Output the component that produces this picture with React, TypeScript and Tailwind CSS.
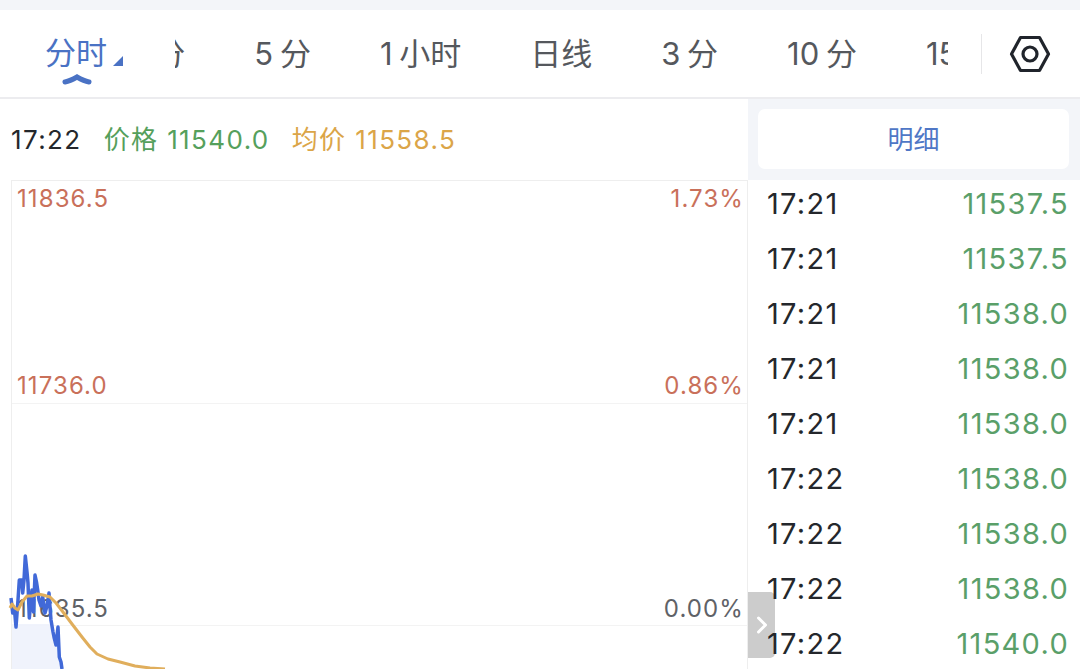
import React from "react";

const FONT = 'Inter, "Noto Sans CJK SC", sans-serif';

const tabs = ["1 分", "5 分", "1 小时", "日线", "3 分", "10 分", "15 分"];

const rows = [
  ["17:21", "11537.5"],
  ["17:21", "11537.5"],
  ["17:21", "11538.0"],
  ["17:21", "11538.0"],
  ["17:21", "11538.0"],
  ["17:22", "11538.0"],
  ["17:22", "11538.0"],
  ["17:22", "11538.0"],
  ["17:22", "11540.0"],
];

const priceLine =
  "11,598 12.7,613 14.5,610 16,627 18,600 19.3,580 21.7,580 22.7,593 24,580 25.3,556 27,572 28,583 29.3,618 31,600 32,590 33.5,612 35,575 36.5,582 37.7,590 39,600 41,606 42.7,597 45,613 47,606 49,593 50,607 51,620 53,632 54,637 56,645 58,627 59.3,657 61,662 62,669";

const priceFill =
  "12,624 51,624 53,632 54,637 56,645 58,627 59.3,657 61,662 62,669 12,669";

const avgLine =
  "10,608 12,604 15,608 18,610 22,602 27,596 32,596 38,594 43,595 50,597 56,603 63,612 72,624 82,637 90,647 97,654 108,659 120,662 135,666 150,668 165,669";

const Tab: React.FC<{ label: string }> = ({ label }) => (
  <span className="shrink-0 whitespace-nowrap text-[31px] leading-none text-[#55585d] [word-spacing:-2px]">
    {label}
  </span>
);

const App: React.FC = () => {
  return (
    <div
      className="flex h-[669px] w-[1080px] flex-col overflow-hidden bg-white"
      style={{ fontFamily: FONT }}
    >
      <div className="h-[10px] shrink-0 bg-[#f3f5f9]" />

      {/* tab bar */}
      <div className="flex h-[89px] shrink-0 items-center border-b-2 border-[#ececef]">
        <div className="relative ml-[45px] w-[130px] shrink-0">
          <span className="text-[31px] leading-none text-[#4a72c4]">分时</span>
          <svg
            className="absolute left-[67px] top-[18px]"
            width="12"
            height="12"
            viewBox="0 0 12 12"
          >
            <path d="M1 11 L11 1 V11 Z" fill="#4a72c4" />
          </svg>
          <svg
            className="absolute left-[17px] top-[37px]"
            width="30"
            height="12"
            viewBox="0 0 30 12"
          >
            <path
              d="M3 8 Q8 7 15 3 Q22 7 27 8"
              fill="none"
              stroke="#4a72c4"
              strokeWidth="5"
              strokeLinecap="round"
            />
          </svg>
        </div>
        <div className="w-[773px] shrink-0 overflow-hidden">
          <div className="ml-[-40px] flex items-center gap-[69px]">
            {tabs.map((t) => (
              <Tab key={t} label={t} />
            ))}
          </div>
        </div>
        <div className="ml-[33px] h-[40px] w-px shrink-0 bg-[#e6e6e8]" />
        <svg
          className="ml-[27px] shrink-0"
          width="42"
          height="38"
          viewBox="0 0 42 38"
          fill="none"
          stroke="#20242b"
          strokeWidth="3.2"
          strokeLinejoin="round"
        >
          <path d="M11.5 2.5 H30.5 L39.5 19 L30.5 35.5 H11.5 L2.5 19 Z" />
          <circle cx="21" cy="19" r="7" />
        </svg>
      </div>

      <div className="flex min-h-0 flex-1">
        {/* left: quote line and chart */}
        <div className="relative flex w-[748px] shrink-0 flex-col">
          <div className="flex h-[81px] shrink-0 items-center pl-[11px] text-[26px] tracking-[1.4px]">
            <span className="text-[#24272c]">17:22</span>
            <span className="ml-[22px] text-[#55a05c]">价格 11540.0</span>
            <span className="ml-[22px] text-[#dba548]">均价 11558.5</span>
          </div>
          <div className="relative ml-[11px] flex-1 border-l border-t border-r border-[#eeeeee] text-[24px] leading-none tracking-[1.1px]">
            <div className="absolute left-0 right-0 top-[222px] h-px bg-[#f3f3f3]" />
            <div className="absolute left-0 right-0 top-[444px] h-px bg-[#f3f3f3]" />
            <span className="absolute left-[5px] top-[6px] text-[#c9705a]">11836.5</span>
            <span className="absolute right-[3px] top-[6px] text-[#c9705a]">1.73%</span>
            <span className="absolute left-[5px] top-[193px] text-[#c9705a]">11736.0</span>
            <span className="absolute right-[3px] top-[193px] text-[#c9705a]">0.86%</span>
            <span className="absolute left-[5px] top-[416px] text-[#5f6267]">11635.5</span>
            <span className="absolute right-[3px] top-[416px] text-[#5f6267]">0.00%</span>
          </div>
          {/* price chart, page area starts at y=99 */}
          <svg
            className="absolute left-0 top-0"
            width="748"
            height="570"
            viewBox="0 99 748 570"
            fill="none"
          >
            <polygon points={priceFill} fill="#eef2fc" fillOpacity="0.9" />
            <polyline
              points={priceLine}
              stroke="#4169d8"
              strokeWidth="3.5"
              strokeLinejoin="round"
            />
            <polyline
              points={avgLine}
              stroke="#e0ae5c"
              strokeWidth="3"
              strokeLinejoin="round"
            />
          </svg>
          <div className="absolute left-[748px] top-[493px] flex h-[66px] w-[27px] items-center justify-center rounded-r-[5px] bg-[#cccccc]">
            <svg width="12" height="20" viewBox="0 0 12 20" fill="none">
              <path
                d="M2.5 3 L9.5 10 L2.5 17"
                stroke="#ffffff"
                strokeWidth="3"
                strokeLinecap="round"
                strokeLinejoin="round"
              />
            </svg>
          </div>
        </div>

        {/* right: ticks */}
        <div className="relative flex-1">
          <div className="flex h-[81px] items-start bg-[#f3f5f9] pl-[10px] pr-[11px] pt-[10px]">
            <div className="flex h-[60px] w-full items-center justify-center rounded-[7px] bg-white text-[26px] text-[#4f77c6]">
              明细
            </div>
          </div>
          <div className="pl-[19px] pr-[11px] text-[29px] tracking-[1.3px]">
            {rows.map((r, i) => (
              <div key={i} className="flex h-[55px] items-start justify-between leading-[48px]">
                <span className="text-[#24272c]">{r[0]}</span>
                <span className="text-[#5a9f69]">{r[1]}</span>
              </div>
            ))}
          </div>
        </div>
      </div>
    </div>
  );
};

export default App;
